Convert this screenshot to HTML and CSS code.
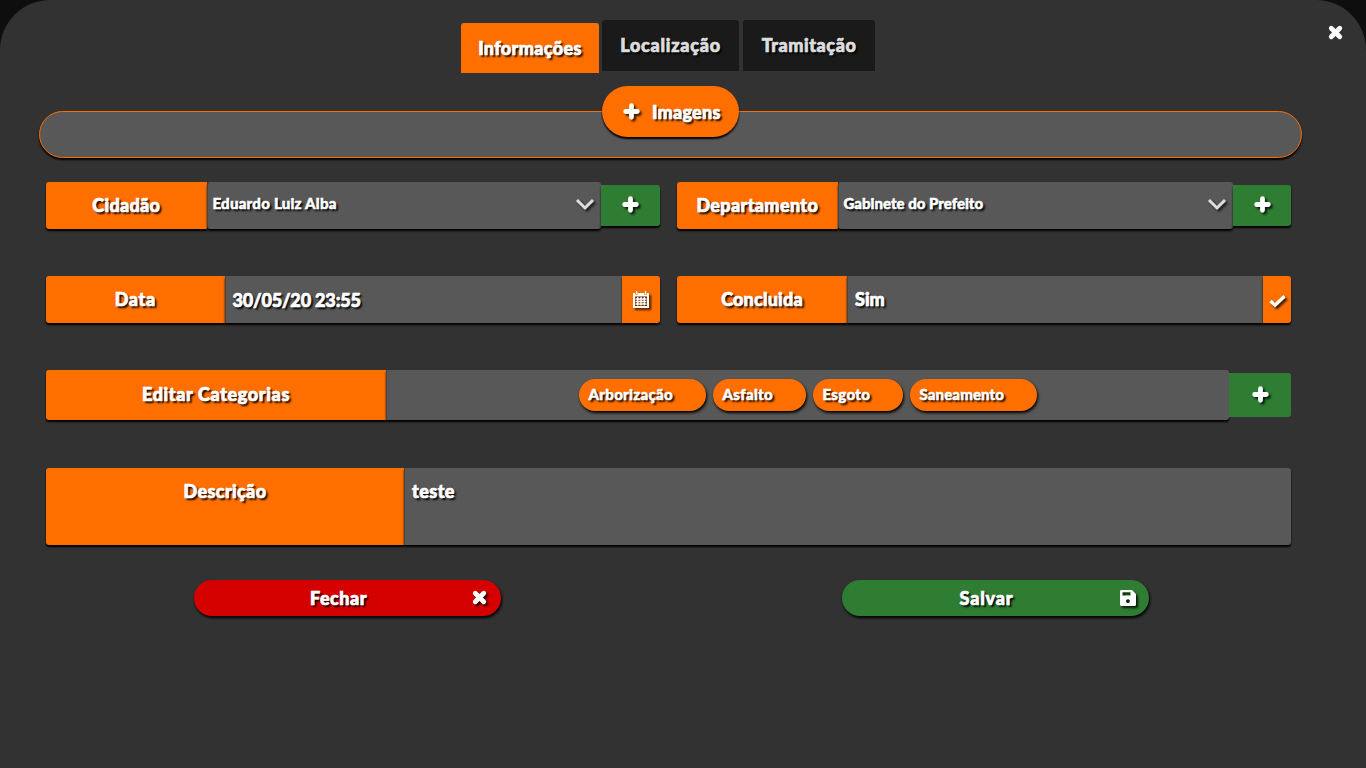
FILE: index.html
```html
<!DOCTYPE html>
<html lang="pt-BR">
<head>
<meta charset="utf-8">
<title>Informações</title>
<link rel="stylesheet" href="styles.css">
</head>
<body>
<svg class="defs" width="0" height="0">
  <symbol id="plus" viewBox="0 0 16 16"><path d="M8 2.500v11M2.500 8h11" fill="none" stroke="currentColor" stroke-width="4.500" stroke-linecap="round"/></symbol>
  <symbol id="cross" viewBox="0 0 16 16"><path d="M4 4l8 8M12 4l-8 8" fill="none" stroke="currentColor" stroke-width="4.500" stroke-linecap="round"/></symbol>
  <symbol id="chevron" viewBox="0 0 20 14"><path d="M2 3l8 8 8-8" fill="none" stroke="currentColor" stroke-width="3"/></symbol>
</svg>
<main class="modal">
  <button class="close" aria-label="Fechar"><svg class="icon"><use href="#cross"/></svg></button>
  <nav class="tabs">
    <a class="tab active"><span class="t t-inf">Informações</span></a>
    <a class="tab tab-loc"><span class="t t-loc">Localização</span></a>
    <a class="tab tab-tra"><span class="t t-tra">Tramitação</span></a>
  </nav>
  <section class="images">
    <button class="add-images"><svg class="icon"><use href="#plus"/></svg><span class="t t-img">Imagens</span></button>
  </section>
  <div class="row">
    <div class="field">
      <label class="label w-select"><span class="t t-cid">Cidadão</span></label>
      <div class="value select"><span class="t small t-edu">Eduardo Luiz Alba</span><svg class="chevron"><use href="#chevron"/></svg></div>
      <button class="add"><svg class="icon"><use href="#plus"/></svg></button>
    </div>
    <div class="field">
      <label class="label w-select"><span class="t t-dep">Departamento</span></label>
      <div class="value select"><span class="t small t-gab">Gabinete do Prefeito</span><svg class="chevron"><use href="#chevron"/></svg></div>
      <button class="add add-dep"><svg class="icon"><use href="#plus"/></svg></button>
    </div>
  </div>
  <div class="row">
    <div class="field">
      <label class="label w-date"><span class="t t-dat">Data</span></label>
      <div class="value date"><span class="t t-num">30/05/20 23:55</span></div>
      <button class="addon calendar"><svg class="icon" viewBox="0 0 16 17"><path fill="currentColor" fill-rule="evenodd" d="M0 2h2.300v1.600h2.400V2h6.600v1.600h2.400V2H16v15H0zM2 5.500v9.500h12V5.500zM3 0h1.300v3H3zM11.900 0h1.300v3h-1.300z"/><path d="M2.500 8h11M2.500 10.500h11M2.500 13h11M4.700 6v8.500M8 6v8.500M11.300 6v8.500" stroke="currentColor" stroke-width="1.300"/></svg></button>
    </div>
    <div class="field">
      <label class="label w-done"><span class="t t-con">Concluida</span></label>
      <div class="value"><span class="t t-sim">Sim</span></div>
      <button class="addon check"><svg class="icon" viewBox="0 0 17 14"><path d="M1.500 7l4.500 4.300L15.500 2.300" fill="none" stroke="currentColor" stroke-width="3.300"/></svg></button>
    </div>
  </div>
  <div class="field categories">
    <label class="label w-cat"><span class="t t-edi">Editar Categorias</span></label>
    <div class="value chips">
      <span class="chip c-arb"><span class="t small t-arb">Arborização</span></span>
      <span class="chip c-asf"><span class="t small t-asf">Asfalto</span></span>
      <span class="chip c-esg"><span class="t small t-esg">Esgoto</span></span>
      <span class="chip c-san"><span class="t small t-san">Saneamento</span></span>
    </div>
    <button class="add add-cat"><svg class="icon"><use href="#plus"/></svg></button>
  </div>
  <div class="field description">
    <label class="label w-desc"><span class="t t-des">Descrição</span></label>
    <div class="value"><span class="t t-tes">teste</span></div>
  </div>
  <footer class="actions">
    <button class="action danger"><span class="action-text"><span class="t t-fec">Fechar</span></span><svg class="icon"><use href="#cross"/></svg></button>
    <button class="action success"><span class="action-text"><span class="t t-sal">Salvar</span></span><svg class="icon save" viewBox="0 0 16 16"><path fill="currentColor" fill-rule="evenodd" d="M1.500 0h10.500l4 4v10.500a1.500 1.500 0 0 1-1.500 1.500h-13A1.500 1.500 0 0 1 0 14.500v-13A1.500 1.500 0 0 1 1.500 0zM2.500 2.200v3.300h8V2.200zM8 9.300a1.900 1.900 0 1 0 .01 0z"/></svg></button>
  </footer>
</main>
</body>
</html>
```
FILE: styles.css
```css
* { box-sizing: border-box; }
body { margin: 0; background: #0e0e0e; font-family: Lato, "Noto Sans", sans-serif; font-weight: 900; color: #fff; overflow: hidden; }
button { border: 0; padding: 0; margin: 0; font: inherit; color: inherit; background: none; }
.defs { position: absolute; }
.modal { position: relative; height: 768px; background: #323232; border-radius: 50px 50px 0 0; padding-top: 20px; }
.t { font-size: 18px; line-height: 24px; white-space: nowrap; -webkit-text-stroke: .7px currentColor; text-shadow: 2px 2px 2px #000; }
.small { font-size: 15px; -webkit-text-stroke-width: .5px; }
.t-inf { letter-spacing: .35px; }
.t-loc { letter-spacing: .75px; }
.t-tra { letter-spacing: .55px; }
.t-img { letter-spacing: .25px; }
.t-cid { letter-spacing: .3px; }
.t-edu { letter-spacing: .25px; }
.t-dep { letter-spacing: .35px; }
.t-dat { letter-spacing: .6px; }
.t-num { letter-spacing: -.15px; }
.t-con { letter-spacing: .2px; }
.t-edi { letter-spacing: .62px; }
.t-arb { letter-spacing: .3px; }
.t-asf { letter-spacing: .3px; }
.t-esg { letter-spacing: .35px; }
.t-san { letter-spacing: .12px; }
.t-des { letter-spacing: .35px; }
.t-tes { letter-spacing: .45px; }
.t-fec { letter-spacing: .5px; }
.t-sal { letter-spacing: .8px; }
.icon { width: 17px; height: 17px; display: block; flex: none; filter: drop-shadow(2px 2px 1px rgba(0,0,0,.8)); }
.close { position: absolute; left: 1327px; top: 24px; }
.close .icon { filter: none; }
.tabs { display: flex; align-items: flex-start; gap: 3px; padding-left: 461px; height: 66px; }
.tab { display: flex; align-items: center; justify-content: center; height: 51px; width: 137px; padding-bottom: 1px; background: #1a1a1a; color: #ddd; border-radius: 3px 3px 0 0; }
.tab.active { width: 138px; height: 50px; margin-top: 3px; background: #ff6f00; color: #fff; }
.tab-tra { width: 132px; margin-left: 1px; }
.images { margin: 25px 64px 24px 39px; height: 47px; border: 1px solid #ff6f00; border-radius: 24px; background: #585858; box-shadow: 0 2px 2px #000; }
.add-images { display: flex; align-items: center; gap: 12px; width: 137px; height: 51px; margin: -26px 0 0 562px; padding-left: 21px; background: #ff6f00; border-radius: 26px; box-shadow: 0 2px 2px #000; }
.row { display: flex; gap: 17px; margin: 0 75px 47px 46px; }
.row .field { width: 614px; height: 47px; }
.field { display: flex; }
.label { display: flex; align-items: center; justify-content: center; padding-bottom: 2px; background: #ff6f00; border-radius: 3px 0 0 3px; box-shadow: 0 2px 2px #000; flex: none; }
.w-select { width: 160.500px; }
.w-date { width: 178.500px; }
.w-done { width: 170px; }
.w-cat { width: 340px; }
.w-desc { width: 358px; }
.value { flex: 1; display: flex; align-items: center; padding: 0 0 2px 7px; background: #585858; box-shadow: 0 2px 2px #000; border-left: 1px solid #444; }
.date { padding-bottom: 0; }
.select { padding: 0 6px 5px 5px; justify-content: space-between; border-radius: 3px; }
.chevron { width: 20px; height: 14px; margin-top: 2px; color: #ddd; filter: drop-shadow(2px 2px 1px rgba(0,0,0,.7)); }
.add { display: flex; align-items: center; justify-content: center; width: 59px; height: 41px; padding-bottom: 3px; margin-top: 3px; background: #2e7d32; border-radius: 0 3px 3px 0; box-shadow: 0 2px 2px #000; }
.add-dep { width: 58px; }
.addon { display: flex; align-items: center; justify-content: center; background: #ff6f00; border-radius: 0 3px 3px 0; box-shadow: 0 2px 2px #000; }
.calendar { width: 38px; }
.calendar .icon { width: 16px; height: 17px; }
.check { width: 28px; padding-top: 3px; }
.check .icon { width: 17px; height: 14px; }
.categories { height: 50px; margin: 0 75px 48px 46px; }
.chips { padding: 0 1px 0 0; justify-content: center; gap: 7px; border-radius: 0 3px 3px 0; }
.chip { display: flex; align-items: center; height: 32px; padding: 0 0 2px 10px; border-radius: 16px; background: #ff6f00; box-shadow: 1px 2px 3px #000; }
.c-arb { width: 127px; }
.c-asf { width: 93px; }
.c-esg { width: 90px; }
.c-san { width: 127px; }
.add-cat { width: 62px; height: 44px; padding-bottom: 1px; box-shadow: none; }
.description { height: 77px; margin: 0 75px 35px 46px; }
.description .label, .description .value { align-items: flex-start; padding-top: 11px; }
.description .value { border-radius: 0 3px 3px 0; }
.actions { display: flex; gap: 341px; padding-left: 194px; }
.action { display: flex; align-items: center; width: 307px; height: 36px; padding-bottom: 1px; border-radius: 18px; box-shadow: 1px 2px 3px #000; }
.action-text { width: 289px; text-align: center; }
.danger { background: #d50000; }
.success { background: #2e7d32; }
.action .icon { margin-left: -12px; }
.action .save { width: 16px; height: 16px; margin-left: -11px; }
```
